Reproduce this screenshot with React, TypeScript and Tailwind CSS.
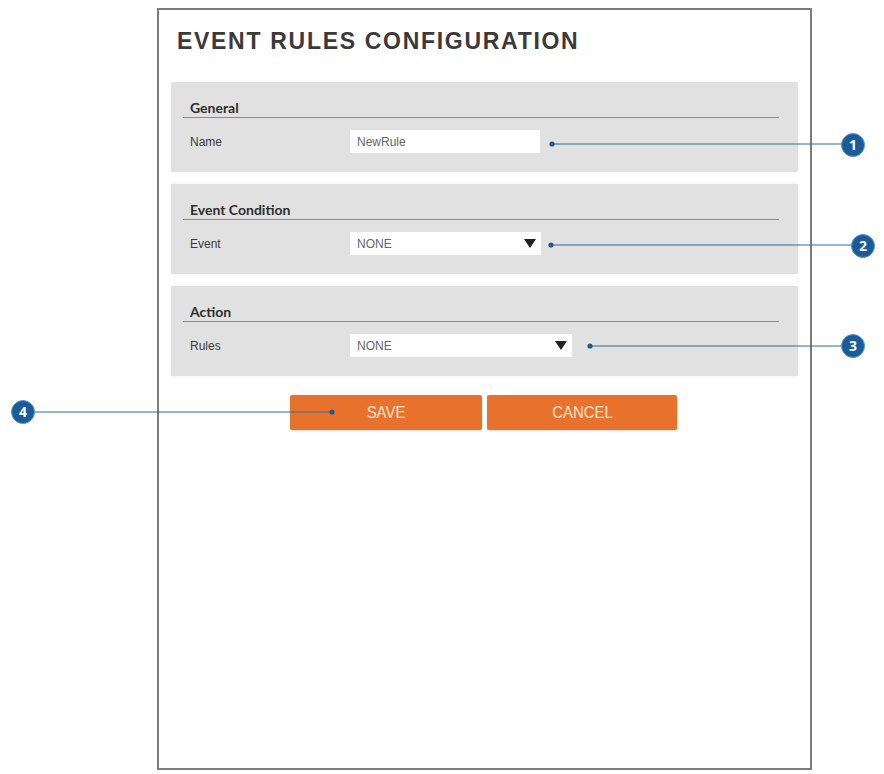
import React from "react";

function Arrow() {
  return (
    <svg width="12" height="9" viewBox="0 0 12 9" className="shrink-0">
      <polygon points="0,0 12,0 6,9" fill="#222" />
    </svg>
  );
}

function Panel({
  title,
  label,
  value,
  select,
  fieldW,
}: {
  title: string;
  label: string;
  value: string;
  select?: boolean;
  fieldW: string;
}) {
  return (
    <div className="bg-[#e1e1e1] rounded-[2px] pt-[17px] pb-[19px] shadow-[0_0_2px_rgba(0,0,0,0.08)]">
      <div className="ml-[12px] mr-[19px] pl-[7px] border-b border-[#8c8c8c] leading-[18px] h-[19px] text-[14px] font-bold text-[#2d2d2d] font-['Lato','Liberation_Sans',sans-serif]">
        {title}
      </div>
      <div className="flex items-center mt-[12px] pl-[19px]">
        <div className="w-[160px] text-[12px] text-[#3a3a3a] font-['Liberation_Sans',Arial,sans-serif]">
          {label}
        </div>
        <div
          className={`${fieldW} h-[23px] bg-white flex items-center justify-between pl-[7px] pr-[5px] text-[12px] text-[#666] font-['Liberation_Sans',Arial,sans-serif]`}
        >
          <span>{value}</span>
          {select && <Arrow />}
        </div>
      </div>
    </div>
  );
}

function Badge({ n, x, y }: { n: string; x: number; y: number }) {
  return (
    <div
      className="absolute w-[24px] h-[24px] -ml-[12px] -mt-[12px] rounded-full bg-[#1a5c99] border border-[#5f95c6] flex items-center justify-center text-white text-[14px] font-bold font-['Open_Sans','Liberation_Sans',sans-serif] leading-none"
      style={{ left: x, top: y }}
    >
      {n}
    </div>
  );
}

function OrangeButton({ w, children }: { w: string; children: React.ReactNode }) {
  return (
    <button
      className={`${w} h-[35px] bg-[#e8722b] rounded-[2px] text-[#fbe6d6] text-[17px] font-['Liberation_Sans',Arial,sans-serif] shadow-[0_1px_2px_rgba(0,0,0,0.15)] flex items-center justify-center`}
    >
      <span className="inline-block scale-x-[0.88]">{children}</span>
    </button>
  );
}

export default function App() {
  const lines = [
    { x1: 552, y1: 144, x2: 853, y2: 144 },
    { x1: 551, y1: 245, x2: 863, y2: 245 },
    { x1: 590, y1: 346, x2: 853, y2: 346 },
    { x1: 23, y1: 412, x2: 332, y2: 412 },
  ];
  return (
    <div className="relative w-[884px] h-[774px] bg-white overflow-hidden">
      <div className="ml-[157px] mt-[8px] w-[655px] h-[762px] border-2 border-[#7c7c7c] bg-white">
        <div className="pt-[18px] pl-[18px] h-[72px]">
          <h1 className="text-[23px] leading-[26px] tracking-[1.7px] font-bold text-[#3a3a3a] font-['Liberation_Sans',Arial,sans-serif]">
            EVENT RULES CONFIGURATION
          </h1>
        </div>
        <div className="px-[12px] flex flex-col gap-[12px]">
          <Panel title="General" label="Name" value="NewRule" fieldW="w-[190px]" />
          <Panel title="Event Condition" label="Event" value="NONE" select fieldW="w-[191px]" />
          <Panel title="Action" label="Rules" value="NONE" select fieldW="w-[222px]" />
        </div>
        <div className="flex justify-center gap-[5px] mt-[19px] pr-[2px]">
          <OrangeButton w="w-[192px]">SAVE</OrangeButton>
          <OrangeButton w="w-[190px]">CANCEL</OrangeButton>
        </div>
      </div>
      <svg className="absolute left-0 top-0 pointer-events-none" width="884" height="774">
        {lines.map((l, i) => (
          <g key={i}>
            <line x1={l.x1} y1={l.y1} x2={l.x2} y2={l.y2} stroke="#2e6a9e" strokeWidth="1.2" />
            <circle cx={i === 3 ? l.x2 : l.x1} cy={l.y1} r="2.6" fill="#1f5a8c" />
          </g>
        ))}
      </svg>
      <Badge n="1" x={853} y={145} />
      <Badge n="2" x={863} y={246} />
      <Badge n="3" x={853} y={346} />
      <Badge n="4" x={23} y={412} />
    </div>
  );
}
